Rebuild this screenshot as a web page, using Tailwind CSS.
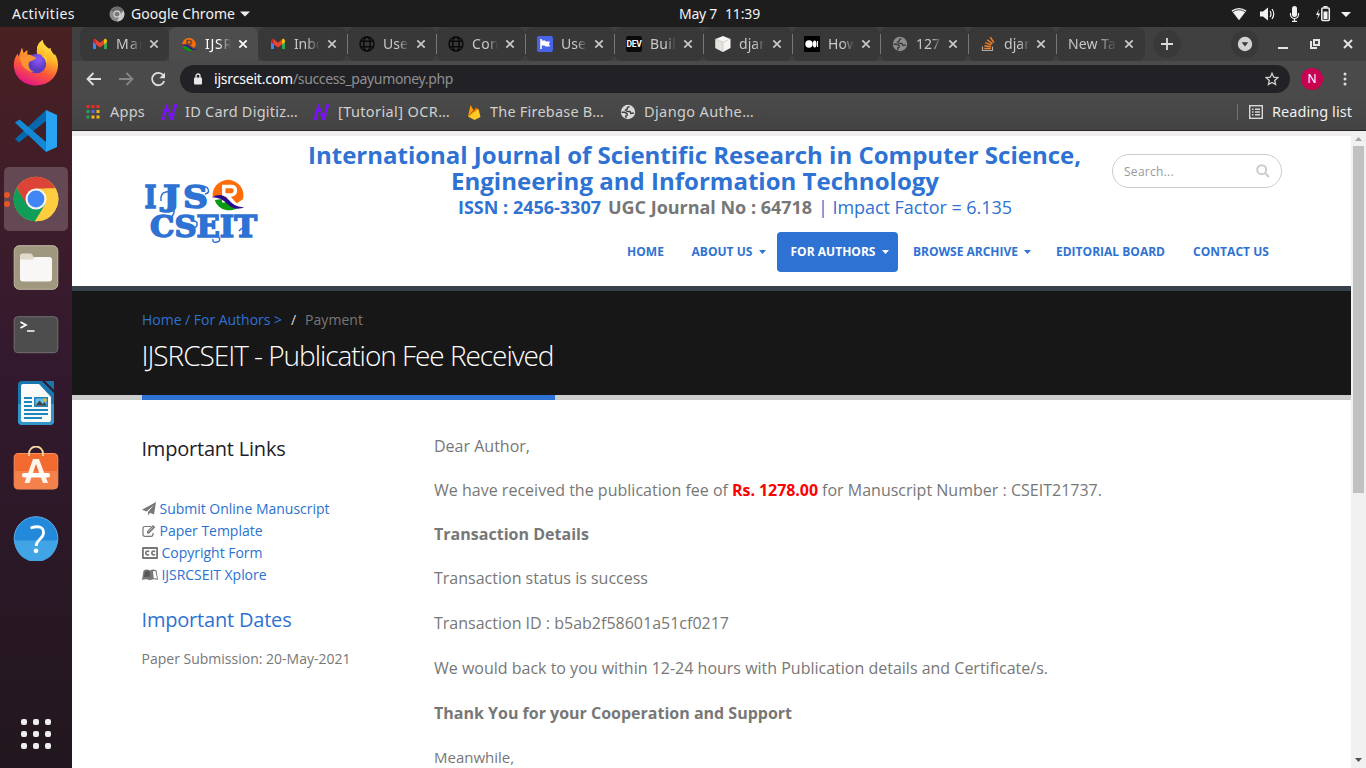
<!DOCTYPE html>
<html lang="en">
<head>
<meta charset="utf-8">
<title>IJSRCSEIT - Publication Fee Received</title>
<script src="https://cdn.jsdelivr.net/npm/@tailwindcss/browser@4"></script>
</head>
<body class="w-[1366px] h-[768px] overflow-hidden flex flex-col bg-white font-['Noto_Sans',sans-serif] text-[14px] whitespace-nowrap">

<svg class="hidden">
  <symbol id="x" viewBox="0 0 10 10"><path d="M1.3 1.3l7.4 7.4M8.7 1.3L1.3 8.7" stroke="currentColor" stroke-width="1.7" fill="none"/></symbol>
  <symbol id="gmail" viewBox="0 0 16 12"><path d="M1 1.5V11h3V5z" fill="#4285f4"/><path d="M12 5v6h3V1.500z" fill="#34a853"/><path d="M1 4V2.200L2.500 0.500 4 1.500V6.500z" fill="#c5221f"/><path d="M3 .8L8 4.800l5-4L12 6.500l-4 3-4-3z" fill="#ea4335"/><path d="M12 6.500V1.500l1.500-1L15 2.200V4z" fill="#fbbc04"/></symbol>
  <symbol id="globe" viewBox="0 0 16 16"><g fill="none" stroke="#0b0b0b" stroke-width="1.500"><circle cx="8" cy="8" r="7"/><ellipse cx="8" cy="8" rx="3.300" ry="7"/><path d="M1.800 5.200h12.400M1.800 10.800h12.400"/></g></symbol>
  <symbol id="earth" viewBox="0 0 16 16"><circle cx="8" cy="8" r="7.200" fill="currentColor"/><path d="M9.500 2.800Q7.200 2.800 7.300 4.800L5.500 6 7 7.300l3 .2L10.800 9.500l3-.5" fill="none" stroke="#3c3c3c" stroke-width="1.400"/><path d="M1.500 8.200l3 .1 2.500 1.200.2 1.700-1.500.8.5 2" fill="none" stroke="#3c3c3c" stroke-width="1.400"/></symbol>
  <symbol id="nn" viewBox="0 0 18 18"><g fill="none" stroke="#7b10ff"><path d="M3 15.500L6.500 3l5.500 12.500L15.500 3" stroke-width="1.600"/><path d="M1.200 15.500h3.600M5 3h3M10.200 15.500h3.600M13.700 3H17M2.500 11.500h3M3.700 7.500h3M6.500 7h3M8.500 11.500h3M11.500 11.500h3M12.700 7.500h3" stroke-width="2.800"/></g></symbol>
  <symbol id="rlogo" viewBox="0 0 32 32"><path d="M2 20A14.500 14.500 0 1 1 30 20L24 24Q15 16 2 17z" fill="#ff6d0a"/><path d="M3.500 21q8-3 14 3 4 4 9 3A14.500 14.500 0 0 1 3.500 21z" fill="#0a9a10"/><path d="M12 23V8h7q4 0 4 3.800T19 16h-4l8 9" fill="none" stroke="#fff" stroke-width="3.200"/><path d="M1 18q9-5 16 3 7 8 15 6-9 5-17-3-6-6-14-6z" fill="#2b0a8c"/></symbol>
  <symbol id="rfav" viewBox="0 0 16 16"><path d="M1 9A7 7 0 1 1 15 9L13 12Q8 8 1 9z" fill="#ff6d0a"/><path d="M2 10.500q4-1 7 2 2 1.500 4 1A7 7 0 0 1 2 10.500z" fill="#0a9a10"/><path d="M6 10V4.500h2.500q2 0 2 1.700T8.500 8H7l3.500 3" fill="none" stroke="#6d4a2e" stroke-width="1.600"/><path d="M0 9q5-2 8.500 1.500T16 13.500q-4 2-8-1.500T0 9z" fill="#3b0f8c"/></symbol>
</svg>

<!-- desktop bar -->
<div class="h-[27px] shrink-0 bg-[#1d1d1d] text-[#f2f2f2] flex items-center relative">
  <span class="ml-3 w-[97px]"><span data-w="63">Activities</span></span>
  <svg class="w-4 h-4" viewBox="0 0 16 16"><circle cx="8" cy="8" r="7.500" fill="#8b8b8b"/><path d="M8 8L1.500 4.500A7.500 7.500 0 0 1 14.500 4.500z" fill="#6c6c6c"/><path d="M8 15.500L11 9.500l3.500-5A7.500 7.500 0 0 1 8 15.500z" fill="#c9c9c9"/><circle cx="8" cy="8" r="3.500" fill="#eee"/><circle cx="8" cy="8" r="2.600" fill="#777"/></svg>
  <span class="ml-[6px] w-[104px]"><span data-w="104">Google Chrome</span></span>
  <svg class="ml-[5px] w-[10px] h-[6px]" viewBox="0 0 10 6"><path d="M0 .5h10L5 5.500z" fill="#f2f2f2"/></svg>
  <span class="ml-[429px] flex gap-[8px] pb-px"><span data-w="38">May 7</span><span data-w="35">11:39</span></span>
  <svg class="ml-auto mr-[11px] w-[124px] h-[20px]" viewBox="1231 3 124 20"><g fill="#f2f2f2"><path d="M1231.500 9.500q7.500-5 15 0l-7.500 9.700z"/><path d="M1232.500 11q6.500-4.500 13 0" fill="none" stroke="#1d1d1d" stroke-width=".8"/><path d="M1260 10.500h3l5-4v13l-5-4h-3z"/><path d="M1270 10q2 3 0 6M1272 8q3.500 5 0 10" fill="none" stroke="#f2f2f2" stroke-width="1.200"/><rect x="1292" y="5" width="5" height="11" rx="2.500"/><path d="M1290.500 12v1.500a4 4 0 0 0 8 0V12M1294.500 17.500v2.500M1292 20.400h5" fill="none" stroke="#f2f2f2" stroke-width="1.200"/><path d="M1319 8l-3 6h2.200l-1 4.500 3-6H1318z"/><rect x="1321.800" y="7" width="7.500" height="12.500" rx="1" fill="none" stroke="#f2f2f2" stroke-width="1.500"/><path d="M1323.500 5h4v1.500h-4zM1323.500 10.500h4v7.500h-4zM1341 11h10l-5 5z"/></g></svg>
</div>

<div class="flex flex-1 min-h-0">
<!-- dock -->
<aside class="w-[72px] shrink-0 bg-linear-to-b from-[#4a2022] via-[#33192e] via-45% to-[#22171e] flex flex-col items-center relative">
  <svg class="w-[46px] h-[48px] mt-[12px]" viewBox="0 0 46 48">
    <defs><linearGradient id="ff" x1=".8" y1="0" x2=".35" y2="1"><stop offset="0" stop-color="#fff44f"/><stop offset=".35" stop-color="#ffb62a"/><stop offset=".65" stop-color="#ff5a36"/><stop offset="1" stop-color="#e31587"/></linearGradient><radialGradient id="fp" cx=".6" cy=".3"><stop offset="0" stop-color="#9059ff"/><stop offset="1" stop-color="#5b3bbf"/></radialGradient></defs>
    <path d="M23 46.500C10 46.500.8 37 .8 26c0-5 1.800-9 4-11.500L5.500 18 9 8.500l1.500 5.500 4-3-.3 4.500 9.800 1L24 8Q26 3 29.500 0.800c.5 4 3 6 6.500 9l1.500-1c.3 3 1.500 4 3.500 7l1-.5c2 3.500 3 6.500 3 10.500 0 12-9.500 20.700-22 20.700z" fill="url(#ff)"/>
    <circle cx="23.500" cy="24.500" r="9.800" fill="url(#fp)"/><path d="M7 18q7-4 16 .5c-.5 3-6 3-7 5-1.500 4 1 8 5 9.500-8 0-14-7-14-15z" fill="#ff9233"/><path d="M23 13q7-1 9 4l-4-.5q6 4 5 10 3-8-1-14l-5-3z" fill="#ffc52e"/>
  </svg>
  <svg class="w-[44px] h-[44px] mt-[22px]" viewBox="0 0 44 44"><path d="M1 30l4 3.500L35 9.500 32 1z" fill="#0669ad"/><path d="M1 13.500L5.500 10.500 32 33v10z" fill="#1389d6"/><path d="M32 1l11 5v32l-11 5z" fill="#27a3f1"/></svg>
  <div class="w-16 h-16 mt-[14px] rounded-[5px] bg-[#644954] flex items-center justify-center">
    <svg class="w-[46px] h-[46px]" viewBox="0 0 46 46"><circle cx="23" cy="23" r="22.300" fill="#fbc93d"/><path d="M23 23L3.700 11.800A22.300 22.300 0 0 1 42.500 12.500H23z" fill="#db4437"/><path d="M3.700 11.800A22.300 22.300 0 0 0 22 45.300L32.500 28 23 23 14 28z" fill="#109d58"/><path d="M3.700 11.800L14 29 23 12.500z" fill="#db4437"/><path d="M22 45.300L32.500 28 32 23V12.500H42.700A22.300 22.300 0 0 1 22 45.300z" fill="#ffcd40"/><circle cx="23" cy="23" r="10.500" fill="#f5f5f5"/><circle cx="23" cy="23" r="8.400" fill="#4285f4"/></svg>
  </div>
  <div class="absolute left-1 top-[165px] flex flex-col gap-[3px]"><i class="size-[6px] rounded-full bg-[#e95420]"></i><i class="size-[6px] rounded-full bg-[#e95420]"></i></div>
  <svg class="w-[46px] h-[45px] mt-[14px]" viewBox="0 0 45 45"><rect x=".7" y=".7" width="43.600" height="43.600" rx="5" fill="#a0977f" stroke="#c1b9a5"/><path d="M6.500 11q0-2.500 2.500-2.500h8q1.500 0 2 1.500l1 2h15v6h-28.500z" fill="#dfdacc"/><path d="M6.500 14.500h13l2-2.500H36q2.500 0 2.500 2.500v19q0 3-3 3H9.500q-3 0-3-3z" fill="#f8f7f5"/></svg>
  <svg class="w-[46px] h-[38px] mt-[26px]" viewBox="0 0 45 38"><rect x=".7" y=".7" width="43.600" height="36" rx="4" fill="#4d4d4d" stroke="#717171"/><path d="M7 6l5.500 3L7 12" fill="none" stroke="#fff" stroke-width="1.700"/><path d="M13.500 15h7.500" stroke="#fff" stroke-width="1.500"/></svg>
  <svg class="w-[38px] h-[46px] mt-[26px]" viewBox="0 0 38 46"><path d="M5 1h20l12 12v28q0 4-4 4H5q-4 0-4-4V5q0-4 4-4z" fill="#1a76ad"/><path d="M1 24h36v17q0 4-4 4H5q-4 0-4-4z" fill="#3496c8"/><path d="M6 4h16l12 13v23q0 2-2 2H6q-2 0-2-2V6q0-2 2-2z" fill="#fafafa"/><path d="M28 1h9v9z" fill="#1a76ad"/><path d="M7 18h8M7 22h8M7 26h8M7 30h24M7 34h24M7 38h18" stroke="#1d86bd" stroke-width="2"/><path d="M17 17h14v10H17z" fill="#2382b8"/><path d="M18.500 18.500H29.500v7h-11z" fill="#67bfe8"/><path d="M18.500 25.500l4-5 3 3.500 2-2 2 3.500z" fill="#404040"/><circle cx="28" cy="20" r="1.700" fill="#f5b52a"/></svg>
  <svg class="w-[46px] h-[44px] mt-[20px]" viewBox="0 0 45 44"><rect x=".7" y="7.500" width="43.600" height="35.500" rx="4" fill="#f26a2e" stroke="#f9925f"/><path d="M1 25h43v14q0 4-4 4H5q-4 0-4-4z" fill="#f4814c"/><path d="M15.500 10V7.500a7 7 0 0 1 14 0V10" fill="none" stroke="#f5d9a3" stroke-width="1.800"/><path d="M19.500 13h6l9 24h-5l-7-19-6.500 19h-5z" fill="#fff3ea"/><rect x="8.500" y="27" width="28" height="4.500" rx="2.200" fill="#fff"/></svg>
  <svg class="w-[46px] h-[45px] mt-[26px]" viewBox="0 0 45 45"><circle cx="22.500" cy="22.500" r="21.800" fill="#2389da" stroke="#5bb3ec"/><path d="M1 24.500h43A21.500 21.500 0 0 1 1 24.500z" fill="#41a4e4"/><path d="M17 12q13-4 13 5c0 6-7.300 6-7.300 13" fill="none" stroke="#fff" stroke-width="2.800"/><circle cx="22.500" cy="34.800" r="2.400" fill="#fff"/></svg>
  <div class="absolute left-[21px] bottom-[19px] grid grid-cols-3 gap-[6px]"><i class="size-[6px] rounded-[2px] bg-[#eee]"></i><i class="size-[6px] rounded-[2px] bg-[#eee]"></i><i class="size-[6px] rounded-[2px] bg-[#eee]"></i><i class="size-[6px] rounded-[2px] bg-[#eee]"></i><i class="size-[6px] rounded-[2px] bg-[#eee]"></i><i class="size-[6px] rounded-[2px] bg-[#eee]"></i><i class="size-[6px] rounded-[2px] bg-[#eee]"></i><i class="size-[6px] rounded-[2px] bg-[#eee]"></i><i class="size-[6px] rounded-[2px] bg-[#eee]"></i></div>
</aside>

<main class="flex-1 min-w-0 flex flex-col">
<!-- tab strip -->
<div class="h-[34px] shrink-0 bg-[#404040] flex pl-2 text-[#c8c8c8]">
  <div class="w-[89px] bg-[#383838] rounded-[8px] flex items-center pl-3"><svg class="size-4"><use href="#gmail"/></svg><span class="ml-2 mb-px w-[26px] overflow-hidden mask-r-from-50%"><span data-w="30">Mar</span></span><svg class="ml-[7px] size-[10px]"><use href="#x"/></svg></div>
  <div class="w-[89px] bg-[#4d4d4d] rounded-t-[8px] flex items-center pl-3 text-white"><svg class="size-4"><use href="#rfav"/></svg><span class="ml-2 mb-px w-[26px] overflow-hidden mask-r-from-50%"><span data-w="28">IJSR</span></span><svg class="ml-[7px] size-[10px]"><use href="#x"/></svg></div>
  <div class="w-[89px] bg-[#383838] rounded-[8px] flex items-center pl-3"><svg class="size-4"><use href="#gmail"/></svg><span class="ml-2 mb-px w-[26px] overflow-hidden mask-r-from-50%"><span data-w="37">Inbox</span></span><svg class="ml-[7px] size-[10px]"><use href="#x"/></svg></div>
  <div class="w-[89px] bg-[#383838] rounded-[8px] flex items-center"><i class="w-px h-5 bg-[#777] mr-[11px]"></i><svg class="size-4"><use href="#globe"/></svg><span class="ml-2 mb-px w-[26px] overflow-hidden mask-r-from-60%"><span data-w="25">Use</span></span><svg class="ml-[7px] size-[10px]"><use href="#x"/></svg></div>
  <div class="w-[89px] bg-[#383838] rounded-[8px] flex items-center"><i class="w-px h-5 bg-[#777] mr-[11px]"></i><svg class="size-4"><use href="#globe"/></svg><span class="ml-2 mb-px w-[26px] overflow-hidden mask-r-from-60%"><span data-w="27">Con</span></span><svg class="ml-[7px] size-[10px]"><use href="#x"/></svg></div>
  <div class="w-[89px] bg-[#383838] rounded-[8px] flex items-center"><i class="w-px h-5 bg-[#777] mr-[11px]"></i><svg class="size-4" viewBox="0 0 16 16"><rect width="16" height="16" rx="2" fill="#4b63e8"/><path d="M4 3v10" stroke="#fff" stroke-width="1.600"/><path d="M4 4.500h4l1 1h4l-1 2.500 1 2.500H8.500l-1-1H4z" fill="#fff"/></svg><span class="ml-2 mb-px w-[26px] overflow-hidden mask-r-from-60%"><span data-w="25">Use</span></span><svg class="ml-[7px] size-[10px]"><use href="#x"/></svg></div>
  <div class="w-[89px] bg-[#383838] rounded-[8px] flex items-center"><i class="w-px h-5 bg-[#777] mr-[11px]"></i><div class="size-4 rounded-[2px] bg-[#0b0b0b] text-white text-[8.500px] font-bold leading-4 text-center font-['Roboto',sans-serif] tracking-[-.3px]">DEV</div><span class="ml-2 mb-px w-[26px] overflow-hidden mask-r-from-60%"><span data-w="26">Buil</span></span><svg class="ml-[7px] size-[10px]"><use href="#x"/></svg></div>
  <div class="w-[89px] bg-[#383838] rounded-[8px] flex items-center"><i class="w-px h-5 bg-[#777] mr-[11px]"></i><svg class="size-4" viewBox="0 0 16 16"><path d="M8 0l7.500 3v9L8 16 .5 12V3z" fill="#f6f5f1"/><path d="M.5 3L8 6.200V16L.5 12z" fill="#e4e2dc"/><path d="M.5 3L8 6.200 15.500 3M8 6v10" fill="none" stroke="#c2c0b9" stroke-width=".6"/></svg><span class="ml-2 mb-px w-[26px] overflow-hidden mask-r-from-60%"><span data-w="29">djan</span></span><svg class="ml-[7px] size-[10px]"><use href="#x"/></svg></div>
  <div class="w-[88px] bg-[#383838] rounded-[8px] flex items-center"><i class="w-px h-5 bg-[#777] mr-[11px]"></i><svg class="size-4" viewBox="0 0 16 16"><rect width="16" height="16" rx="1" fill="#000"/><circle cx="5" cy="8" r="3.700" fill="#fff"/><ellipse cx="10.700" cy="8" rx="1.800" ry="3.500" fill="#fff"/><path d="M13.600 5v6" stroke="#fff"/></svg><span class="ml-2 mb-px w-[26px] overflow-hidden mask-r-from-60%"><span data-w="30">How</span></span><svg class="ml-[7px] size-[10px]"><use href="#x"/></svg></div>
  <div class="w-[88px] bg-[#383838] rounded-[8px] flex items-center"><i class="w-px h-5 bg-[#777] mr-[11px]"></i><svg class="size-4 text-[#8d8d8d]"><use href="#earth"/></svg><span class="ml-2 mb-px w-[26px] overflow-hidden mask-r-from-60%"><span data-w="24">127</span></span><svg class="ml-[6px] size-[10px]"><use href="#x"/></svg></div>
  <div class="w-[88px] bg-[#383838] rounded-[8px] flex items-center"><i class="w-px h-5 bg-[#777] mr-[11px]"></i><svg class="size-4" viewBox="0 0 16 16"><path d="M2.500 10.500v4h10v-4" fill="none" stroke="#aaa" stroke-width="1.200"/><path d="M4.300 12.500h6.500M4.300 9.800l6.500 1M5.300 6.700l6 2.500M7.300 3.700l5 4.200M10.300 1.200l3.500 5.300" stroke="#f48024" stroke-width="1.400"/></svg><span class="ml-2 mb-px w-[26px] overflow-hidden mask-r-from-60%"><span data-w="29">djan</span></span><svg class="ml-[6px] size-[10px]"><use href="#x"/></svg></div>
  <div class="w-[89px] bg-[#383838] rounded-[8px] flex items-center"><i class="w-px h-5 bg-[#777] mr-[11px]"></i><span class="mb-px w-[49px] overflow-hidden mask-r-from-60%"><span data-w="48">New Ta</span></span><svg class="ml-[7px] size-[10px]"><use href="#x"/></svg></div>
  <div class="ml-[8px] mt-[3px] size-7 rounded-full bg-[#393939] flex items-center justify-center"><svg class="size-3" viewBox="0 0 12 12"><path d="M6 0v12M0 6h12" stroke="#ddd" stroke-width="1.800"/></svg></div>
  <svg class="ml-[50px] mt-[3px] w-[125px] h-7" viewBox="1231 30 125 28"><circle cx="1245" cy="44" r="14" fill="#393939"/><circle cx="1245" cy="44" r="7.200" fill="#d2d2d2"/><path d="M1241.700 42.200h6.600l-3.300 4.300z" fill="#393939"/><g fill="none" stroke="#e3e3e3"><path d="M1278 48h10" stroke-width="2"/><path d="M1314 40h5v5h-5zM1311 41v7h6" stroke-width="2"/><path d="M1344 40l8 8M1352 40l-8 8" stroke-width="2"/></g></svg>
</div>
<!-- toolbar -->
<div class="h-[36px] shrink-0 bg-[#4a4a4a] flex items-center">
  <svg class="ml-[14px] w-[84px] h-5" viewBox="86 69 84 20"><path d="M101 79H88M93.500 73L87.500 79l6 6" fill="none" stroke="#dedede" stroke-width="1.800"/><path d="M119 79h13M126.500 73l6 6-6 6" fill="none" stroke="#858585" stroke-width="1.800"/><path d="M163.300 75.300A6.200 6.200 0 1 0 164.200 81" fill="none" stroke="#dedede" stroke-width="1.800"/><path d="M165 72.500v5.700h-5.700z" fill="#dedede"/></svg>
  <div class="ml-[10px] w-[1110px] h-7 rounded-full bg-[#222226] flex items-center pl-[14px] text-[#8f8f92]">
    <svg class="w-[8px] h-[12px]" viewBox="0 0 8 12"><rect y="4.500" width="8" height="7" rx="1" fill="#e8e8e8"/><path d="M2 5V3a2 2 0 0 1 4 0v2" fill="none" stroke="#e8e8e8" stroke-width="1.300"/></svg>
    <span class="ml-[12px] mb-px text-white"><span data-w="79">ijsrcseit.com</span></span><span class="mb-px" data-w="160">/success_payumoney.php</span>
    <svg class="ml-auto mr-[11px] size-[14px]" viewBox="0 0 14 14"><path d="M7 1.300l1.700 3.900 4.100.4-3.100 2.800.9 4.100L7 10.400l-3.600 2.100.9-4.100L1.200 5.600l4.100-.4z" fill="none" stroke="#cfcfcf" stroke-width="1.300"/></svg>
  </div>
  <div class="ml-[11px] size-[22px] rounded-full bg-[#c9024f] text-white text-[12px] leading-[22px] text-center">N</div>
  <svg class="ml-[20px] w-[4px] h-[14px]" viewBox="0 0 4 14"><g fill="#dedede"><circle cx="2" cy="2" r="1.500"/><circle cx="2" cy="7" r="1.500"/><circle cx="2" cy="12" r="1.500"/></g></svg>
</div>
<!-- bookmarks -->
<div class="h-[34px] shrink-0 bg-linear-to-b from-[#4a4a4a] to-[#434343] border-b border-[#262626] flex items-center text-[14.500px] text-[#cfcfcf] pl-[14px] pr-[14px] pb-[4px]">
  <svg class="w-[14px] h-[14px]" viewBox="0 0 14 14"><path d="M.500 0h3v3h-3zM5.500 0h3v3h-3zM10.500 0h3v3h-3z" fill="#ef2b22"/><path d="M.500 5h3v3h-3z" fill="#22a55a"/><path d="M5.500 5h3v3h-3z" fill="#5a63f0"/><path d="M10.500 5h3v3h-3zM5.500 10.500h3v3h-3zM10.500 10.500h3v3h-3z" fill="#f5b813"/><path d="M.500 10.500h3v3h-3z" fill="#22a55a"/></svg>
  <span class="ml-[10px] w-[50px]"><span data-w="35">Apps</span></span>
  <svg class="size-[18px]"><use href="#nn"/></svg>
  <span class="ml-[7px] w-[127px]"><span data-w="113">ID Card Digitiz…</span></span>
  <svg class="size-[18px]"><use href="#nn"/></svg>
  <span class="ml-[8px] w-[129px]"><span data-w="112">[Tutorial] OCR…</span></span>
  <svg class="w-[14px] h-[16px]" viewBox="0 0 14 16"><path d="M1 12.500L3.500 1l3 5z" fill="#ffa000"/><path d="M1 12.500L9.500 3.500l2 2.500z" fill="#f57c00"/><path d="M1 12.500L11.500 5l2 8-6 3z" fill="#ffca28"/></svg>
  <span class="ml-[9px] w-[130px]"><span data-w="114">The Firebase B…</span></span>
  <svg class="size-4 text-[#d8d8d8]"><use href="#earth"/></svg>
  <span class="ml-[8px]"><span data-w="110">Django Authe…</span></span>
  <i class="ml-auto w-px h-4 bg-[#747474]"></i>
  <svg class="ml-[11px] size-[14px]" viewBox="0 0 14 14"><rect x=".7" y=".7" width="12.600" height="12.600" fill="none" stroke="#d8d8d8" stroke-width="1.400"/><path d="M3 4.200h1.500M3 7h1.500M3 9.800h1.500M6 4.200h5M6 7h5M6 9.800h5" stroke="#d8d8d8" stroke-width="1.400"/></svg>
  <span class="ml-[9px] text-[#f0f0f0]"><span data-w="80">Reading list</span></span>
</div>

<!-- page and scrollbar -->
<div class="flex flex-1 min-h-0 font-['Open_Sans',sans-serif] text-[#777]">
<div class="w-[1279px] shrink-0 overflow-hidden">
  <header class="h-[155px] border-t-[5px] border-[#efedee] bg-white flex">
    <svg class="ml-[70px] mt-[40px] w-[120px] h-[72px] shrink-0" viewBox="142 176 120 72">
      <g font-family="DejaVu Serif" font-weight="bold" fill="#2e72d3" stroke="#2e72d3" stroke-width="1.500"><text x="144.500" y="207.500" font-size="32" textLength="12" lengthAdjust="spacingAndGlyphs">I</text><text x="163" y="205.500" font-size="28" textLength="17" lengthAdjust="spacingAndGlyphs">J</text><text x="183" y="207.500" font-size="32" textLength="25" lengthAdjust="spacingAndGlyphs">S</text><text x="150" y="236.500" font-size="29" textLength="107" lengthAdjust="spacingAndGlyphs">CSEIT</text></g>
      <g fill="none" stroke="#2e72d3" stroke-width="1.500"><path d="M171 208q5 3 2 7t-5 0M161 201q-1-8 5-9t5 6M205 194q5-1 3-5t-5 0M193 221q5 0 4 4t-5 1M218 236q4 5-1 6t-4-3M239 236q6 0 5-5t-5 0"/></g>
      <svg x="211" y="178" width="34" height="34"><use href="#rlogo"/></svg>
    </svg>
    <div class="ml-[8px] w-[1020px]">
      <div class="flex h-[96px]">
        <div class="ml-[38px] w-[804px] pt-[6px] text-[24px] leading-[26px] font-bold text-[#2e72d3]">
          <div><span data-w="773">International Journal of Scientific Research in Computer Science,</span></div>
          <div class="pl-[143px]"><span data-w="488">Engineering and Information Technology</span></div>
          <div class="pl-[150px] text-[18px] flex"><span class="w-[150px]"><span data-w="143">ISSN : 2456-3307</span></span><span class="w-[210px] text-[#777]"><span data-w="204">UGC Journal No : 64718</span></span><span class="font-normal"><span data-w="194">| Impact Factor = 6.135</span></span></div>
        </div>
        <div class="mt-[18px] w-[170px] h-[34px] rounded-full border border-[#ccc] flex items-center pl-[11px] pr-[11px] text-[12px] text-[#999]"><span class="mt-px" data-w="50">Search...</span><svg class="ml-auto size-[14px]" viewBox="0 0 14 14"><circle cx="5.700" cy="5.700" r="4.500" fill="none" stroke="#ccc" stroke-width="2"/><path d="M9 9l4 4" stroke="#ccc" stroke-width="2.200"/></svg></div>
      </div>
      <nav class="flex h-10 ml-[344px] text-[12px] leading-[40px] font-bold text-[#2e72d3]">
        <span class="w-[64px] pl-[13px]"><span data-w="37">HOME</span></span>
        <span class="w-[99px] pl-[13.500px] flex items-center"><span data-w="61">ABOUT US</span><svg class="ml-[6px] w-[7px] h-[4px]" viewBox="0 0 7 4"><path d="M0 0h7L3.500 4z" fill="currentColor"/></svg></span>
        <span class="w-[121px] pl-[13.500px] flex items-center bg-[#2e72d3] text-white rounded-[4px]"><span data-w="85">FOR AUTHORS</span><svg class="ml-[6px] w-[7px] h-[4px]" viewBox="0 0 7 4"><path d="M0 0h7L3.500 4z" fill="currentColor"/></svg></span>
        <span class="w-[143px] pl-[15px] flex items-center"><span data-w="105">BROWSE ARCHIVE</span><svg class="ml-[6px] w-[7px] h-[4px]" viewBox="0 0 7 4"><path d="M0 0h7L3.500 4z" fill="currentColor"/></svg></span>
        <span class="w-[137px] pl-[15px]"><span data-w="109">EDITORIAL BOARD</span></span>
        <span class="pl-[15px]"><span data-w="76">CONTACT US</span></span>
      </nav>
    </div>
  </header>
  <section class="h-[114px] bg-[#171717] border-t-[5px] border-[#384049] border-b-[5px] border-b-[#ccc] relative">
    <div class="pl-[70px] pt-[18px] text-[14px] leading-[22px] flex"><span class="w-[149px] text-[#2e72d3]"><span data-w="140">Home / For Authors &gt;</span></span><span class="w-[14px] text-[#ddd]">/</span><span data-w="58">Payment</span></div>
    <h1 class="pl-[69.500px] text-white font-light text-[28px] leading-[42px] mt-[3px]"><span data-w="412">IJSRCSEIT - Publication Fee Received</span></h1>
    <i class="absolute left-[70px] -bottom-[5px] w-[413px] h-[5px] bg-[#2e72d3]"></i>
  </section>
  <section class="flex pl-[69.500px]">
    <div class="w-[292.500px] pt-[35px] text-[14px] leading-[22px]">
      <h2 class="text-[20px] leading-[28px] text-[#1d2127]"><span data-w="144">Important Links</span></h2>
      <ul class="mt-[35px] text-[#2a71d0]">
        <li class="flex items-center"><svg class="w-[14px] h-[14px] mr-[4px]" viewBox="0 0 14 14"><path d="M14 0L12 12.500l-4-1.700L6 13.500V10L12 3 4.500 9.500 0 7.800z" fill="#777"/></svg><span data-w="170">Submit Online Manuscript</span></li>
        <li class="flex items-center"><svg class="w-[14px] h-[14px] mr-[4px]" viewBox="0 0 14 14"><path d="M9 2.500H3Q1 2.500 1 4.500v6Q1 12.300 3 12.300h6q2 0 2-2V9" fill="none" stroke="#777" stroke-width="1.200"/><path d="M5 9.500V7.200L11 1l2.300 2.300-6 6.200z" fill="#777"/><path d="M6.500 7.700L11 3.200" stroke="#fff" stroke-width=".6"/></svg><span data-w="103">Paper Template</span></li>
        <li class="flex items-center"><svg class="w-[16px] h-[12px] mr-[4px]" viewBox="0 0 16 12"><rect width="16" height="12" rx="1" fill="#777"/><path d="M1.800 2h12.400v8H1.800z" fill="#fff"/><path d="M7 4.800a1.800 1.800 0 1 0 0 2.400M13 4.800a1.800 1.800 0 1 0 0 2.400" fill="none" stroke="#777" stroke-width="1.700"/></svg><span data-w="101">Copyright Form</span></li>
        <li class="flex items-center"><svg class="w-[16px] h-[12px] mr-[4px]" viewBox="0 0 16 12"><path d="M0 11L1.500 1.500Q5-.5 8 1.500q3-2 6.500 0L16 11q-4-1.500-8 .3Q4 9.500 0 11z" fill="#777"/><path d="M3 2.500q3-1 5 0L7.500 8q-3-.7-5.500 0z" fill="#555"/><path d="M11 2.200q1.500-.5 2.500 0L15 9.500q-2-.5-3.300-.2z" fill="#fff"/></svg><span data-w="105">IJSRCSEIT Xplore</span></li>
      </ul>
      <h2 class="mt-[20px] text-[20px] leading-[28px] text-[#2e72d3]"><span data-w="150">Important Dates</span></h2>
      <p class="mt-[14px]"><span data-w="209">Paper Submission: 20-May-2021</span></p>
    </div>
    <div class="pt-[35px] text-[16px] leading-[22px] flex flex-col gap-[22px]">
      <p><span data-w="96">Dear Author,</span></p>
      <p><span data-w="294">We have received the publication fee of</span><b class="text-[#f00] ml-1"><span data-w="86">Rs. 1278.00</span></b><span class="ml-1"><span data-w="280">for Manuscript Number : CSEIT21737.</span></span></p>
      <p class="font-bold"><span data-w="155">Transaction Details</span></p>
      <p><span data-w="214">Transaction status is success</span></p>
      <p class="mt-px"><span data-w="295">Transaction ID : b5ab2f58601a51cf0217</span></p>
      <p class="mt-px"><span data-w="614">We would back to you within 12-24 hours with Publication details and Certificate/s.</span></p>
      <p class="font-bold mt-px"><span data-w="358">Thank You for your Cooperation and Support</span></p>
      <p class="text-[15px]"><span data-w="80">Meanwhile,</span></p>
    </div>
  </section>
</div>
<div class="w-[15px] bg-[#f1f1f1] flex flex-col items-center">
  <svg class="mt-[6px] w-[7px] h-[4px] shrink-0" viewBox="0 0 7 4"><path d="M0 4L3.500 0 7 4z" fill="#a3a3a3"/></svg>
  <i class="mt-[5px] w-[11px] h-[347px] bg-[#c1c1c1] shrink-0"></i>
  <svg class="mt-auto mb-[6px] w-[7px] h-[4px] shrink-0" viewBox="0 0 7 4"><path d="M0 0h7L3.500 4z" fill="#505050"/></svg>
</div>
</div>
</main>
</div>
<script>
/* Spread each label over its data-w width with letter spacing. */
function fitLabels() {
  document.querySelectorAll('[data-w]').forEach(function (el) {
    el.style.display = 'inline-block';
    el.style.flexShrink = '0';
    el.style.letterSpacing = '0px';
    var extra = (+el.dataset.w - el.getBoundingClientRect().width) / el.textContent.length;
    el.style.letterSpacing = extra + 'px';
  });
}
window.addEventListener('load', function () { fitLabels(); document.fonts.ready.then(fitLabels); setTimeout(fitLabels, 50); });
</script>
</body>
</html>
